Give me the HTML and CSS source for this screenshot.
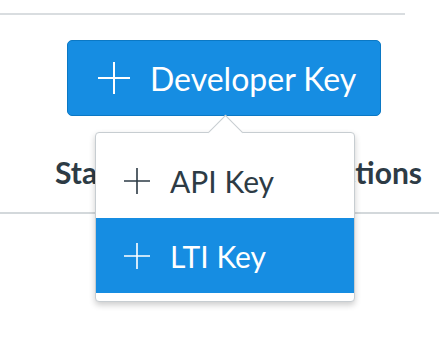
FILE: index.html
```html
<!DOCTYPE html>
<html lang="en">
<head>
  <meta charset="UTF-8">
  <meta name="viewport" content="width=device-width, initial-scale=1.0">
  <title>Developer Keys</title>
  <link rel="stylesheet" href="styles.css">
</head>
<body>
  <div class="page">
    <div class="divider"></div>

    <div class="toolbar">
      <div class="add-menu">
        <button class="btn-primary">
          <svg class="plus" width="32" height="32" viewBox="0 0 32 32"><path d="M16 0V32M0 16H32" stroke="currentColor" stroke-width="2" fill="none"/></svg>
          <span>Developer Key</span>
        </button>

        <div class="popover">
          <div class="caret"></div>
          <ul class="menu">
            <li class="menu-item">
              <svg class="plus" width="26" height="26" viewBox="0 0 26 26"><path d="M13 0V26M0 13H26" stroke="currentColor" stroke-width="1.6" fill="none"/></svg>
              <span>API Key</span>
            </li>
            <li class="menu-item active">
              <svg class="plus" width="26" height="26" viewBox="0 0 26 26"><path d="M13 0V26M0 13H26" stroke="currentColor" stroke-width="1.6" fill="none"/></svg>
              <span>LTI Key</span>
            </li>
          </ul>
        </div>
      </div>
    </div>

    <div class="table-head">
      <span>State</span>
      <span>Actions</span>
    </div>
  </div>
</body>
</html>
```

FILE: styles.css
```css
html, body {
  margin: 0;
  min-height: 100vh;
}

body {
  font-family: Lato, "Open Sans", sans-serif;
  color: #2d3b45;
  background: #ffffff;
}

.page {
  width: 439px;
  min-height: 356px;
}

.divider {
  margin-top: 13px;
  width: 405px;
  height: 2px;
  background: #d9dde0;
}

.toolbar {
  padding-top: 25px;
  padding-left: 67px;
}

.add-menu {
  position: relative;
  width: 314px;
}

.btn-primary {
  display: flex;
  align-items: center;
  gap: 20px;
  width: 314px;
  height: 76px;
  padding: 0 0 0 30px;
  box-sizing: border-box;
  background: #168de2;
  color: #ffffff;
  border: 1px solid #0b78c4;
  border-radius: 5px;
  font-family: Lato, sans-serif;
  font-size: 32px;
  cursor: pointer;
}

.plus {
  flex: none;
}

/* dropdown */
.popover {
  position: absolute;
  top: 92px;
  left: 28px;
  width: 258px;
  background: #ffffff;
  border: 1px solid #c7cdd1;
  border-radius: 4px;
  box-shadow: 0 3px 6px rgba(0, 0, 0, 0.2);
  z-index: 2;
}

.caret {
  position: absolute;
  top: -13px;
  left: 117px;
  width: 24px;
  height: 24px;
  background: #ffffff;
  border-top: 1px solid #c7cdd1;
  border-left: 1px solid #c7cdd1;
  transform: rotate(45deg);
}

.menu {
  position: relative;
  list-style: none;
  margin: 0;
  padding: 10px 0 8px;
}

.menu-item {
  display: flex;
  align-items: center;
  gap: 20px;
  height: 75px;
  padding-left: 28px;
  font-size: 30px;
  color: #2d3b45;
}

.menu-item.active {
  background: #168de2;
  color: #ffffff;
}

.table-head {
  display: flex;
  justify-content: space-between;
  margin-top: 38px;
  padding: 0 17px 22px 55px;
  border-bottom: 2px solid #d3d8db;
  font-size: 30px;
  font-weight: bold;
  line-height: 36px;
}
```
